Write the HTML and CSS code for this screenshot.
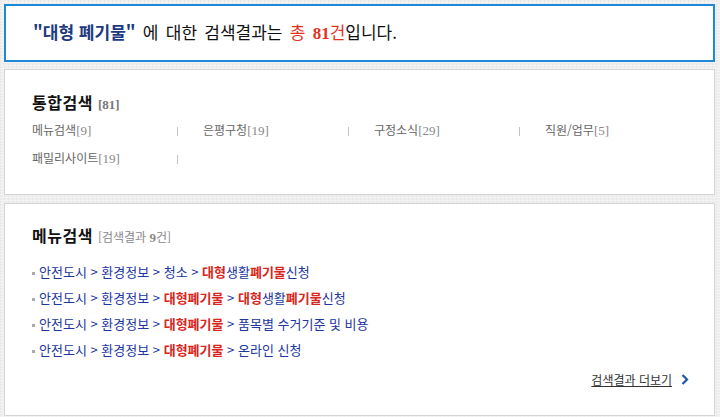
FILE: index.html
```html
<!DOCTYPE html>
<html lang="ko">
<head>
<meta charset="utf-8">
<link rel="stylesheet" href="styles.css">
</head>
<body>
<div class="page">
  <div class="summary">
    <span class="query">"대형 폐기물"</span> 에 대한 검색결과는 <span class="total">총 <b class="num">81</b>건</span>입니다.
  </div>

  <div class="box box-all">
    <h2 class="title">통합검색 <span class="count">[81]</span></h2>
    <ul class="cats">
      <li><span class="cat">메뉴검색<span class="n">[9]</span></span><span class="sep"></span></li>
      <li><span class="cat">은평구청<span class="n">[19]</span></span><span class="sep"></span></li>
      <li><span class="cat">구정소식<span class="n">[29]</span></span><span class="sep"></span></li>
      <li><span class="cat">직원/업무<span class="n">[5]</span></span></li>
      <li><span class="cat">패밀리사이트<span class="n">[19]</span></span><span class="sep"></span></li>
    </ul>
  </div>

  <div class="box box-menu">
    <h2 class="title">메뉴검색 <span class="sub">[검색결과 <b>9</b>건]</span></h2>
    <ul class="results">
      <li>안전도시 &gt; 환경정보 &gt; 청소 &gt; <em>대형</em>생활<em>폐기물</em>신청</li>
      <li>안전도시 &gt; 환경정보 &gt; <em>대형폐기물</em> &gt; <em>대형</em>생활<em>폐기물</em>신청</li>
      <li>안전도시 &gt; 환경정보 &gt; <em>대형폐기물</em> &gt; 품목별 수거기준 및 비용</li>
      <li>안전도시 &gt; 환경정보 &gt; <em>대형폐기물</em> &gt; 온라인 신청</li>
    </ul>
    <div class="more-row">
      <a class="more" href="#">검색결과 더보기</a>
      <svg class="chev" width="8" height="11" viewBox="0 0 8 11"><path d="M1.5 1 L6 5.5 L1.5 10" fill="none" stroke="#2456a8" stroke-width="2.2"/></svg>
    </div>
  </div>
</div>
</body>
</html>
```

FILE: styles.css
```css
* { box-sizing: border-box; }
html, body { margin: 0; padding: 0; }
body {
  background-color: #eeeeee;
  background-image:
    repeating-linear-gradient(0deg, rgba(255,255,255,0.35) 0 1px, transparent 1px 3px),
    repeating-linear-gradient(90deg, rgba(0,0,0,0.025) 0 1px, transparent 1px 4px);
  font-family: "Noto Sans CJK KR", "Noto Sans", sans-serif;
  color: #222;
  width: 720px;
  height: 417px;
  overflow: hidden;
}
.page {
  padding: 4px 5px 0 4px;
  display: flex;
  flex-direction: column;
}
.summary {
  height: 58px;
  border: 2px solid #1c8ad6;
  background: #fff;
  padding-left: 27px;
  font-size: 17px;
  line-height: 51px;
  color: #111;
  letter-spacing: 0;
  word-spacing: 2.5px;
  white-space: nowrap;
}
.query { color: #1d3a7e; font-weight: 700; word-spacing: 0; }
.total { color: #e3331f; }
.num { font-family: "Liberation Serif", serif; font-weight: 700; font-size: 17px; }

.box {
  background: #fff;
  border: 1px solid #d5d5d5;
  padding: 0 24px 0 27px;
}
.box-all {
  margin-top: 7px;
  padding-top: 22px;
  padding-bottom: 22px;
}
.box-menu {
  margin-top: 8px;
  padding-top: 21px;
  padding-bottom: 27px;
}
.title {
  margin: 0;
  font-size: 16px;
  line-height: 20px;
  font-weight: 700;
  color: #111;
  letter-spacing: 0.5px;
}
.count {
  font-family: "Liberation Serif", serif;
  font-size: 13px;
  font-weight: 700;
  color: #777;
  letter-spacing: 0;
}
.sub {
  font-size: 12px;
  font-weight: 400;
  color: #888;
  letter-spacing: 0;
}
.sub b { font-family: "Liberation Serif", serif; font-size: 13px; }

.cats {
  list-style: none;
  margin: 1px 0 0;
  padding: 0;
  display: grid;
  grid-template-columns: repeat(4, 146px);
  column-gap: 25px;
}
.cats li {
  display: flex;
  align-items: center;
  justify-content: space-between;
  height: 28px;
}
.cat {
  font-size: 12px;
  color: #666;
  letter-spacing: 0;
}
.n {
  font-family: "Liberation Serif", serif;
  font-size: 13px;
  color: #888;
}
.sep {
  width: 1px;
  height: 9px;
  background: #c4c4c4;
  margin-top: 3px;
}

.results {
  list-style: none;
  margin: 11px 0 0;
  padding: 0;
}
.results li {
  height: 26px;
  line-height: 26px;
  font-size: 13px;
  color: #2036a0;
  letter-spacing: 0;
  display: flex;
  align-items: center;
  white-space: pre;
}
.results li::before {
  content: "";
  width: 3px;
  height: 3px;
  background: #aaa;
  margin-right: 4px;
  margin-top: 2px;
}
.results em {
  font-style: normal;
  font-weight: 700;
  color: #d9261c;
}
.more-row {
  margin-top: 7px;
  height: 18px;
  display: flex;
  justify-content: flex-end;
  align-items: center;
  gap: 9px;
  padding-right: 1px;
}
.more {
  font-size: 12px;
  color: #333;
  text-decoration: underline;
  letter-spacing: 0;
}
.chev { display: block; }
```
